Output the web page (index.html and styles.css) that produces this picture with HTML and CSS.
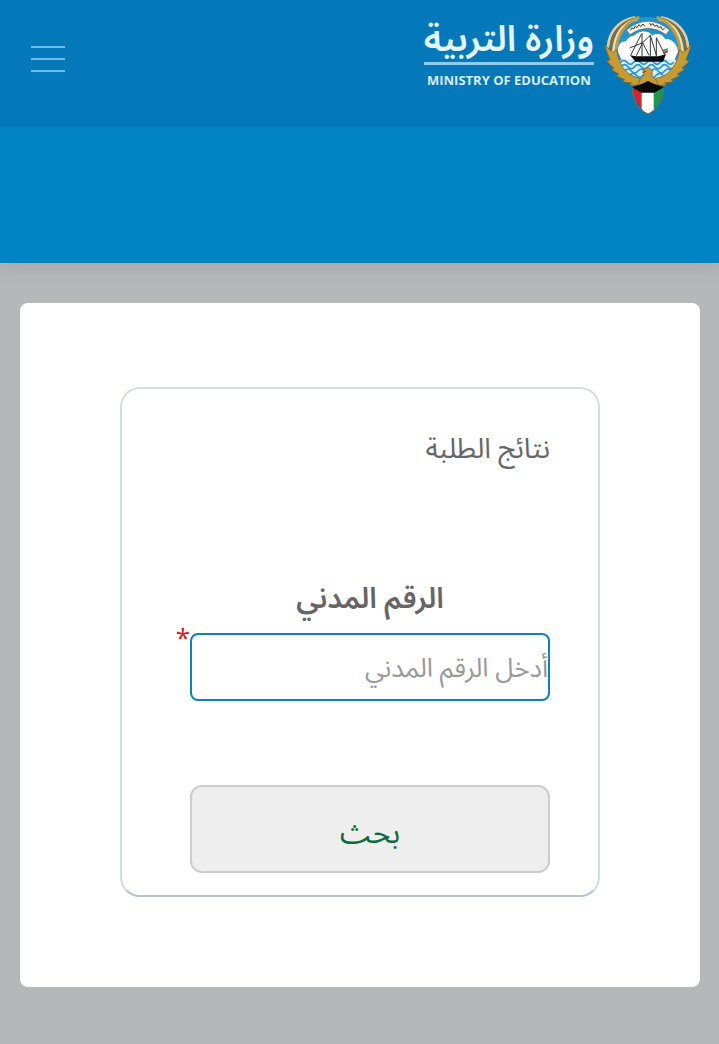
FILE: index.html
```html
<!DOCTYPE html>
<html lang="ar" dir="rtl">
<head>
  <meta charset="utf-8">
  <meta name="viewport" content="width=device-width, initial-scale=1">
  <title>نتائج الطلبة</title>
  <link rel="stylesheet" href="styles.css">
</head>
<body>
  <header class="header">
    <div class="topbar">
      <a class="logo" href="#">
        <svg class="emblem" viewBox="39 24 270 306" aria-hidden="true">
          <!-- disc with sky, clouds and sea -->
          <circle cx="174" cy="132" r="97" fill="#2494d1"/>
          <path d="M84 140C83 116 96 108 108 109C116 92 134 95 141 85C160 75 180 80 187 92C204 81 221 91 224 101C244 101 263 115 264 140L252 168H96Z" fill="#fff"/>
          <path d="M109 75Q174 22 239 75L228 89Q174 51 120 89Z" fill="#f5f2e8" stroke="#5c6464" stroke-width="2"/>
          <path d="M121 76l5-7 5 3 5-9 5 5 6-9 5 6 7-8 5 7M179 54l3 7 7-5 5 8 7-4 4 8 8-3 4 9 7-3" fill="none" stroke="#3b3d40" stroke-width="3"/>
          <path d="M88 165Q174 154 260 165Q252 212 174 226Q96 212 88 165Z" fill="#d8eff9"/>
          <g fill="none" stroke="#2c94ce" stroke-width="5">
            <path d="M91 172q10-12 20 0t20 0 20 0 20 0 20 0 20 0 20 0 20 0"/>
            <path d="M94 185q10-12 20 0t20 0 20 0 20 0 20 0 20 0 20 0 20 0"/>
            <path d="M104 198q10-12 20 0t20 0 20 0 20 0 20 0 20 0 20 0"/>
            <path d="M119 211q10-12 20 0t20 0 20 0 20 0 20 0"/>
          </g>
          <!-- dhow -->
          <path d="M120 151L137 154H205L228 148L219 170H137Z" fill="#080b10"/>
          <path d="M156 85V153M181 91V153M199 98V153M119 129L158 113L181 91M139 152L158 113M158 113L177 151M181 91L199 151M122 151L155 86M199 98L225 150" fill="none" stroke="#30363a" stroke-width="3"/>
          <path d="M219 134l14-4v5l-14 5z" fill="#38965a"/>
          <path d="M220 140l14-4v6l-14 5z" fill="#c92b35"/>
          <!-- wing tips, from the outside in -->
          <g fill="none" stroke-width="8">
            <path d="M136 37C86 46 56 80 54 128M212 37C262 46 292 80 294 128" stroke="#d8d0b4"/>
            <path d="M139 40C93 50 64 84 61 138M209 40C255 50 284 84 287 138" stroke="#8d6a2c"/>
            <path d="M142 41C101 53 73 86 70 142M206 41C247 53 275 86 278 142" stroke="#e6dcc0"/>
            <path d="M148 36C106 53 80 88 77 145M200 36C242 53 268 88 271 145" stroke="#c69a35"/>
          </g>
          <!-- falcon -->
          <g fill="#c69a35" stroke="#7c5c20" stroke-width="2">
            <path d="M43 120L68 142L80 134C84 165 98 197 128 213L162 225L157 241H116L124 234L96 230L104 224L78 212L87 208L62 193L72 190L50 169L60 165Z"/>
            <path d="M305 120L280 142L268 134C264 165 250 197 220 213L186 225L191 241H232L224 234L252 230L244 224L270 212L261 208L286 193L276 190L298 169L288 165Z"/>
            <path d="M151 222Q166 214 160 203Q158 189 174 188Q190 191 186 207Q183 216 197 222L205 241H143Z"/>
          </g>
          <path d="M158 203l10-5" stroke="#72511b" stroke-width="4"/>
          <!-- flag shield -->
          <path d="M128 246Q132 290 157 312V262Z" fill="#d8222f"/>
          <path d="M155 261H193V312Q178 328 174 326Q165 325 155 311Z" fill="#fff"/>
          <path d="M191 262L220 246Q217 290 191 313Z" fill="#20974a"/>
          <path d="M126 247Q154 239 174 228Q194 239 222 247L193 263H155Z" fill="#090b09"/>
          <path d="M126 247Q130 311 174 327Q218 311 222 247" fill="none" stroke="#856c36" stroke-width="3"/>
        </svg>
        <span class="logo-text">
          <span class="logo-ar">وزارة التربية</span>
          <span class="logo-en" lang="en" dir="ltr">MINISTRY OF EDUCATION</span>
        </span>
      </a>
      <button class="menu-button" type="button" aria-label="القائمة">
        <span class="menu-line"></span>
        <span class="menu-line"></span>
        <span class="menu-line"></span>
      </button>
    </div>
    <div class="banner"></div>
  </header>

  <main class="card">
    <form class="results-form">
      <h1 class="form-title">نتائج الطلبة</h1>
      <label class="form-label" for="civil-id">الرقم المدني</label>
      <div class="field">
        <input class="form-input" id="civil-id" type="text" inputmode="numeric" placeholder="أدخل الرقم المدني" required>
        <span class="required">*</span>
      </div>
      <button class="search-button" type="submit">بحث</button>
    </form>
  </main>
</body>
</html>
```
FILE: styles.css
```css
* {
  box-sizing: border-box;
}

body {
  margin: 0;
  background-color: #b6b7b9;
  color: #666;
  font-family: "Noto Sans", "Noto Sans Arabic", "DejaVu Sans", sans-serif;
}

.header {
  background-color: #0084c4;
  box-shadow: 0 2px 20px rgba(0, 0, 0, 0.12);
}

.topbar {
  display: flex;
  justify-content: space-between;
  align-items: flex-start;
  min-height: 127px;
  padding: 13px 26px 12px 31px;
  background-color: #0478b8;
}

.banner {
  height: 136px;
}

.logo {
  display: flex;
  align-items: flex-start;
  gap: 9px;
  color: #e4f5fe;
  text-decoration: none;
}

.emblem {
  width: 90px;
  height: 102px;
}

.logo-text {
  display: flex;
  flex-direction: column;
}

.logo-ar {
  height: 52px;
  border-bottom: 3px solid #8fcdf0;
  font-size: 36px;
  font-weight: 600;
  line-height: 50px;
  text-align: center;
  white-space: nowrap;
}

.logo-en {
  color: #d5effc;
  font-family: "Open Sans", sans-serif;
  font-size: 13px;
  font-weight: bold;
  line-height: 30px;
  text-align: center;
  white-space: nowrap;
}

.menu-button {
  display: flex;
  flex-direction: column;
  gap: 10px;
  margin: 33px 0 0;
  padding: 0;
  border: none;
  background: none;
  cursor: pointer;
}

.menu-line {
  width: 34px;
  height: 2px;
  background-color: #6fbde8;
}

.card {
  margin: 40px 19px 57px 20px;
  padding: 84px 100px 90px;
  border-radius: 8px;
  background-color: #fff;
}

.results-form {
  display: flex;
  flex-direction: column;
  padding: 34px 48px 22px 68px;
  border: 2px solid #d6dbe1;
  border-bottom-color: #b9c2cc;
  border-radius: 20px;
}

.form-title {
  margin: 0 0 102px;
  font-size: 28px;
  font-weight: normal;
  line-height: 48px;
}

.form-label {
  margin-bottom: 12px;
  font-size: 29px;
  font-weight: 600;
  line-height: 48px;
  text-align: center;
}

.field {
  position: relative;
  margin-bottom: 84px;
}

.form-input {
  display: block;
  width: 100%;
  height: 68px;
  padding: 0;
  border: 2px solid #0f82b4;
  border-radius: 8px;
  outline: none;
  background-color: #fff;
  color: #666;
  font: inherit;
  font-size: 26px;
}

.form-input::placeholder {
  color: #999;
  opacity: 1;
}

.required {
  position: absolute;
  top: -12px;
  right: 100%;
  color: #d8201f;
  font-size: 26px;
  line-height: 32px;
}

.search-button {
  height: 88px;
  padding: 8px 0 0;
  border: 2px solid #ccc;
  border-radius: 12px;
  background-color: #eee;
  color: #0b6b3d;
  font: inherit;
  font-size: 30px;
  cursor: pointer;
}
```
